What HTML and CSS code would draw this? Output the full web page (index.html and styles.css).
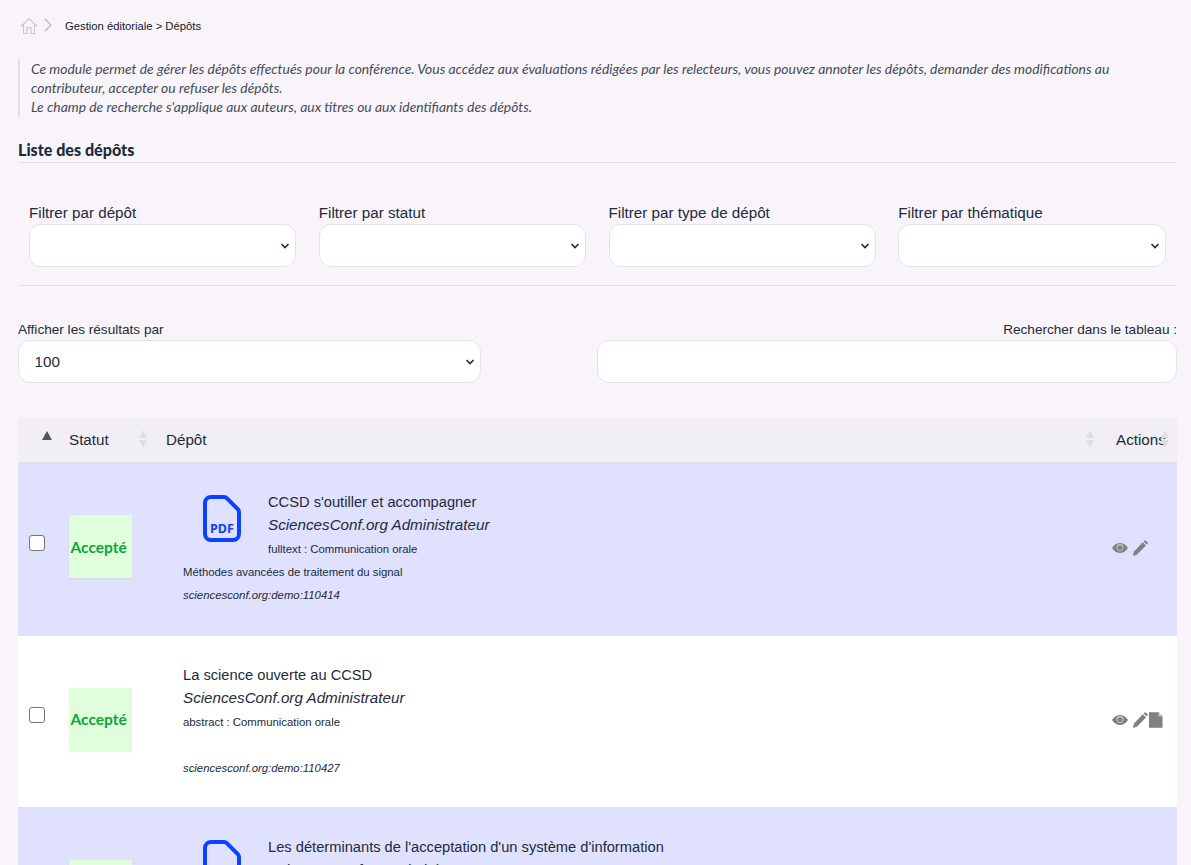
FILE: index.html
```html
<!DOCTYPE html>
<html lang="fr">
<head>
<meta charset="utf-8">
<title>Dépôts</title>
<link rel="stylesheet" href="styles.css">
</head>
<body>
<nav class="crumbs">
  <svg class="home" width="18" height="18" viewBox="0 0 18 18"><path d="M1 9.500 9 1.500l8 8M3.500 7.500V16.500h3.500V10.500h4V16.500h3.500V7.500" fill="none" stroke="#c4c8cf" stroke-width="1.100"/></svg>
  <svg class="sep" width="10" height="14" viewBox="0 0 10 14"><path d="M2 1l6 6-6 6" fill="none" stroke="#b5b8be" stroke-width="1.200"/></svg>
  <span class="crumb-text">Gestion éditoriale &gt; Dépôts</span>
</nav>
<blockquote class="intro">Ce module permet de gérer les dépôts effectués pour la conférence. Vous accédez aux évaluations rédigées par les relecteurs, vous pouvez annoter les dépôts, demander des modifications au contributeur, accepter ou refuser les dépôts.<br>Le champ de recherche s'applique aux auteurs, aux titres ou aux identifiants des dépôts.</blockquote>
<h2 class="section-title">Liste des dépôts</h2>
<section class="filters">
  <div class="filter"><label>Filtrer par dépôt</label><div class="select"><svg class="chev" width="10" height="6" viewBox="0 0 10 6"><path d="M1.500 1 5 4.500 8.500 1" fill="none" stroke="#212b3a" stroke-width="1.600"/></svg></div></div>
  <div class="filter"><label>Filtrer par statut</label><div class="select"><svg class="chev" width="10" height="6" viewBox="0 0 10 6"><path d="M1.500 1 5 4.500 8.500 1" fill="none" stroke="#212b3a" stroke-width="1.600"/></svg></div></div>
  <div class="filter"><label>Filtrer par type de dépôt</label><div class="select"><svg class="chev" width="10" height="6" viewBox="0 0 10 6"><path d="M1.500 1 5 4.500 8.500 1" fill="none" stroke="#212b3a" stroke-width="1.600"/></svg></div></div>
  <div class="filter"><label>Filtrer par thématique</label><div class="select"><svg class="chev" width="10" height="6" viewBox="0 0 10 6"><path d="M1.500 1 5 4.500 8.500 1" fill="none" stroke="#212b3a" stroke-width="1.600"/></svg></div></div>
</section>
<section class="controls">
  <div class="length"><label>Afficher les résultats par</label><div class="select"><span>100</span><svg class="chev" width="10" height="6" viewBox="0 0 10 6"><path d="M1.500 1 5 4.500 8.500 1" fill="none" stroke="#212b3a" stroke-width="1.600"/></svg></div></div>
  <div class="search"><label>Rechercher dans le tableau :</label><div class="select"></div></div>
</section>
<div class="table">
  <div class="thead">
    <div class="c-check"><span class="sort-up"></span></div>
    <div class="c-status">Statut<span class="sort sort-status"></span></div>
    <div class="c-main">Dépôt<span class="sort"></span></div>
    <div class="c-actions">Actions<span class="sort sort-over"></span></div>
  </div>
  <div class="row row-blue">
    <div class="c-check"><span class="checkbox"></span></div>
    <div class="c-status"><span class="badge">Accepté</span></div>
    <div class="c-main">
      <div class="head-line">
        <svg class="pdf" width="40" height="50" viewBox="0 0 40 50"><path d="M9 3H22a4 4 0 0 1 2.800 1.200L35.800 15.200a4 4 0 0 1 1.200 2.800V40a6 6 0 0 1-6 6H9a6 6 0 0 1-6-6V9a6 6 0 0 1 6-6z" fill="none" stroke="#0a43ff" stroke-width="4"/><text x="20" y="39" text-anchor="middle" class="pdf-label">PDF</text></svg>
        <div><div class="title">CCSD s'outiller et accompagner</div><div class="author">SciencesConf.org Administrateur</div><div class="small">fulltext : Communication orale</div></div>
      </div>
      <div class="small theme">Méthodes avancées de traitement du signal</div>
      <div class="small ident">sciencesconf.org:demo:110414</div>
    </div>
    <div class="c-actions">
      <svg class="eye" width="16" height="12" viewBox="0 0 16 12"><path d="M0 6c2-3.500 5-5 8-5s6 1.500 8 5c-2 3.500-5 5-8 5S2 9.500 0 6z" fill="#808080"/><circle cx="8" cy="5.500" r="3.400" fill="#c9c9dc"/><circle cx="8" cy="5.800" r="2.500" fill="#808080"/></svg>
      <svg width="15" height="16" viewBox="0 0 15 16"><path d="M0 16 .8 11.800 9.800 2.200 13 5.400 3.800 14.700z" fill="#808080"/><path d="M10.500 1.400 11.500.4h1.200l2 2v1.200l-1 1z" fill="#808080"/></svg>
    </div>
  </div>
  <div class="row">
    <div class="c-check"><span class="checkbox"></span></div>
    <div class="c-status"><span class="badge">Accepté</span></div>
    <div class="c-main">
      <div class="title">La science ouverte au CCSD</div><div class="author">SciencesConf.org Administrateur</div><div class="small">abstract : Communication orale</div>
      <div class="small theme">&nbsp;</div>
      <div class="small ident">sciencesconf.org:demo:110427</div>
    </div>
    <div class="c-actions">
      <svg class="eye" width="16" height="12" viewBox="0 0 16 12"><path d="M0 6c2-3.500 5-5 8-5s6 1.500 8 5c-2 3.500-5 5-8 5S2 9.500 0 6z" fill="#808080"/><circle cx="8" cy="5.500" r="3.400" fill="#d8d8d8"/><circle cx="8" cy="5.800" r="2.500" fill="#808080"/></svg>
      <svg width="15" height="16" viewBox="0 0 15 16"><path d="M0 16 .8 11.800 9.800 2.200 13 5.400 3.800 14.700z" fill="#808080"/><path d="M10.500 1.400 11.500.4h1.200l2 2v1.200l-1 1z" fill="#808080"/></svg>
      <svg class="file" width="14" height="16" viewBox="0 0 14 16"><path d="M0 0h10L14 4V16H0z" fill="#808080"/><path d="M10 0v4h4z" fill="#d0d0d0"/></svg>
    </div>
  </div>
  <div class="row row-blue">
    <div class="c-check"><span class="checkbox"></span></div>
    <div class="c-status"><span class="badge">Accepté</span></div>
    <div class="c-main">
      <div class="head-line">
        <svg class="pdf" width="40" height="50" viewBox="0 0 40 50"><path d="M9 3H22a4 4 0 0 1 2.800 1.200L35.800 15.200a4 4 0 0 1 1.200 2.800V40a6 6 0 0 1-6 6H9a6 6 0 0 1-6-6V9a6 6 0 0 1 6-6z" fill="none" stroke="#0a43ff" stroke-width="4"/><text x="20" y="39" text-anchor="middle" class="pdf-label">PDF</text></svg>
        <div><div class="title">Les déterminants de l'acceptation d'un système d'information</div><div class="author">SciencesConf.org Administrateur</div><div class="small">fulltext : Communication orale</div></div>
      </div>
    </div>
    <div class="c-actions"></div>
  </div>
</div>
</body>
</html>
```
FILE: styles.css
```css
* { box-sizing: border-box; }
html, body { margin: 0; height: 865px; overflow: hidden; }
body {
  background: #f8f4fa;
  color: #212b3a;
  font-family: "Liberation Sans", Arial, sans-serif;
  font-size: 15.2px;
  padding: 17px 14px 0 18px;
}
.crumbs { display: flex; align-items: center; height: 18px; padding-left: 2px; }
.sep { margin-left: 5px; margin-top: -3px; }
.crumb-text { margin-left: 12px; font-size: 11.25px; color: #111827; }
.intro {
  margin: 24px 0 0;
  border-left: 2px solid #dfe1e8;
  padding: 0 0 0 11px;
  font-family: "Lato", sans-serif;
  font-style: italic;
  font-size: 13.9px;
  line-height: 19px;
  color: #434c58;
  height: 58px;
}
.section-title {
  margin: 14px 0 0;
  padding-top: 7px;
  font-family: "Lato", sans-serif;
  font-size: 16.1px;
  font-weight: 900;
  line-height: 24px;
  height: 32px;
  border-bottom: 1px solid #dee2e6;
}
.filters {
  display: grid;
  grid-template-columns: repeat(4, 267.45px);
  gap: 22.35px;
  padding: 40px 11px 18px;
  border-bottom: 1px solid #dee2e6;
}
.filter label { display: block; line-height: 20px; }
.select {
  position: relative;
  height: 43px;
  background: #fff;
  border: 1px solid #e2e4ec;
  border-radius: 12px;
  padding-left: 15.5px;
  line-height: 41px;
}
.chev { position: absolute; right: 5px; top: 18px; }
.filter .select { margin-top: 1px; }
.controls {
  display: grid;
  grid-template-columns: 463px 580px;
  justify-content: space-between;
  margin-top: 35px;
  font-size: 13.6px;
}
.controls label { display: block; line-height: 18px; margin-bottom: 1px; }
.controls .select { font-size: 15.2px; }
.search label { text-align: right; }
.table { margin-top: 34px; }
.thead, .row {
  display: grid;
  grid-template-columns: 39px 97px 950px 73px;
}
.thead {
  height: 46px;
  background: #f1eff5;
  border-bottom: 1px solid #dee2e6;
  align-items: center;
}
.thead > div { position: relative; height: 100%; display: flex; align-items: center; padding-left: 12px; }
.sort-up { position: absolute; left: 24px; top: 14px; width: 0; height: 0; border: 5.500px solid transparent; border-top: 0; border-bottom: 9px solid #555; }
.sort { position: absolute; right: 9px; top: 13px; width: 9px; height: 18px; }
.sort::before, .sort::after { content: ""; position: absolute; left: 0; width: 0; height: 0; border: 4.500px solid transparent; }
.sort::before { top: 0; border-top: 0; border-bottom: 8px solid #dedede; }
.sort::after { bottom: 0; border-bottom: 0; border-top: 8px solid #dedede; }
.sort-status { right: 6px; }
.sort-over { right: 7px; }
.row {
  height: 172.5px;
  background: #fff;
  border-bottom: 1px solid #dee2e6;
}
.row-blue { background: #e0e1fe; }
.c-check { padding-left: 11px; display: flex; align-items: center; }
.row .c-check { padding-bottom: 12px; }
.checkbox { width: 16px; height: 16px; background: #fff; border: 1px solid #767676; border-radius: 3px; }
.row .c-status { padding: 0 0 4px 12px; display: flex; align-items: center; }
.badge {
  display: flex;
  align-items: center;
  width: 63px;
  height: 63px;
  padding-left: 1.5px;
  background: #e1fedc;
  color: #0ca53b;
  font-family: "Lato", sans-serif;
  font-weight: 700;
  font-size: 15.5px;
  box-shadow: 0 1px 2px rgba(0, 0, 0, .06);
}
.row .c-main { padding: 28px 0 0 29px; }
.head-line { display: flex; }
.pdf { margin: 3px 26px 0 19px; flex: none; }
.pdf-label { font: 700 12.5px "Noto Sans", sans-serif; fill: #0a43ff; }
.title { line-height: 22px; font-size: 14.68px; }
.author { line-height: 24px; margin-bottom: 1px; font-style: italic; }
.small { font-size: 11.35px; line-height: 23px; }
.ident { font-style: italic; }
.row .c-actions { display: flex; align-items: center; gap: 1px; padding: 0 0 2px 8px; }
.eye { margin-right: 4px; }
.file { width: 13.5px; }
```
